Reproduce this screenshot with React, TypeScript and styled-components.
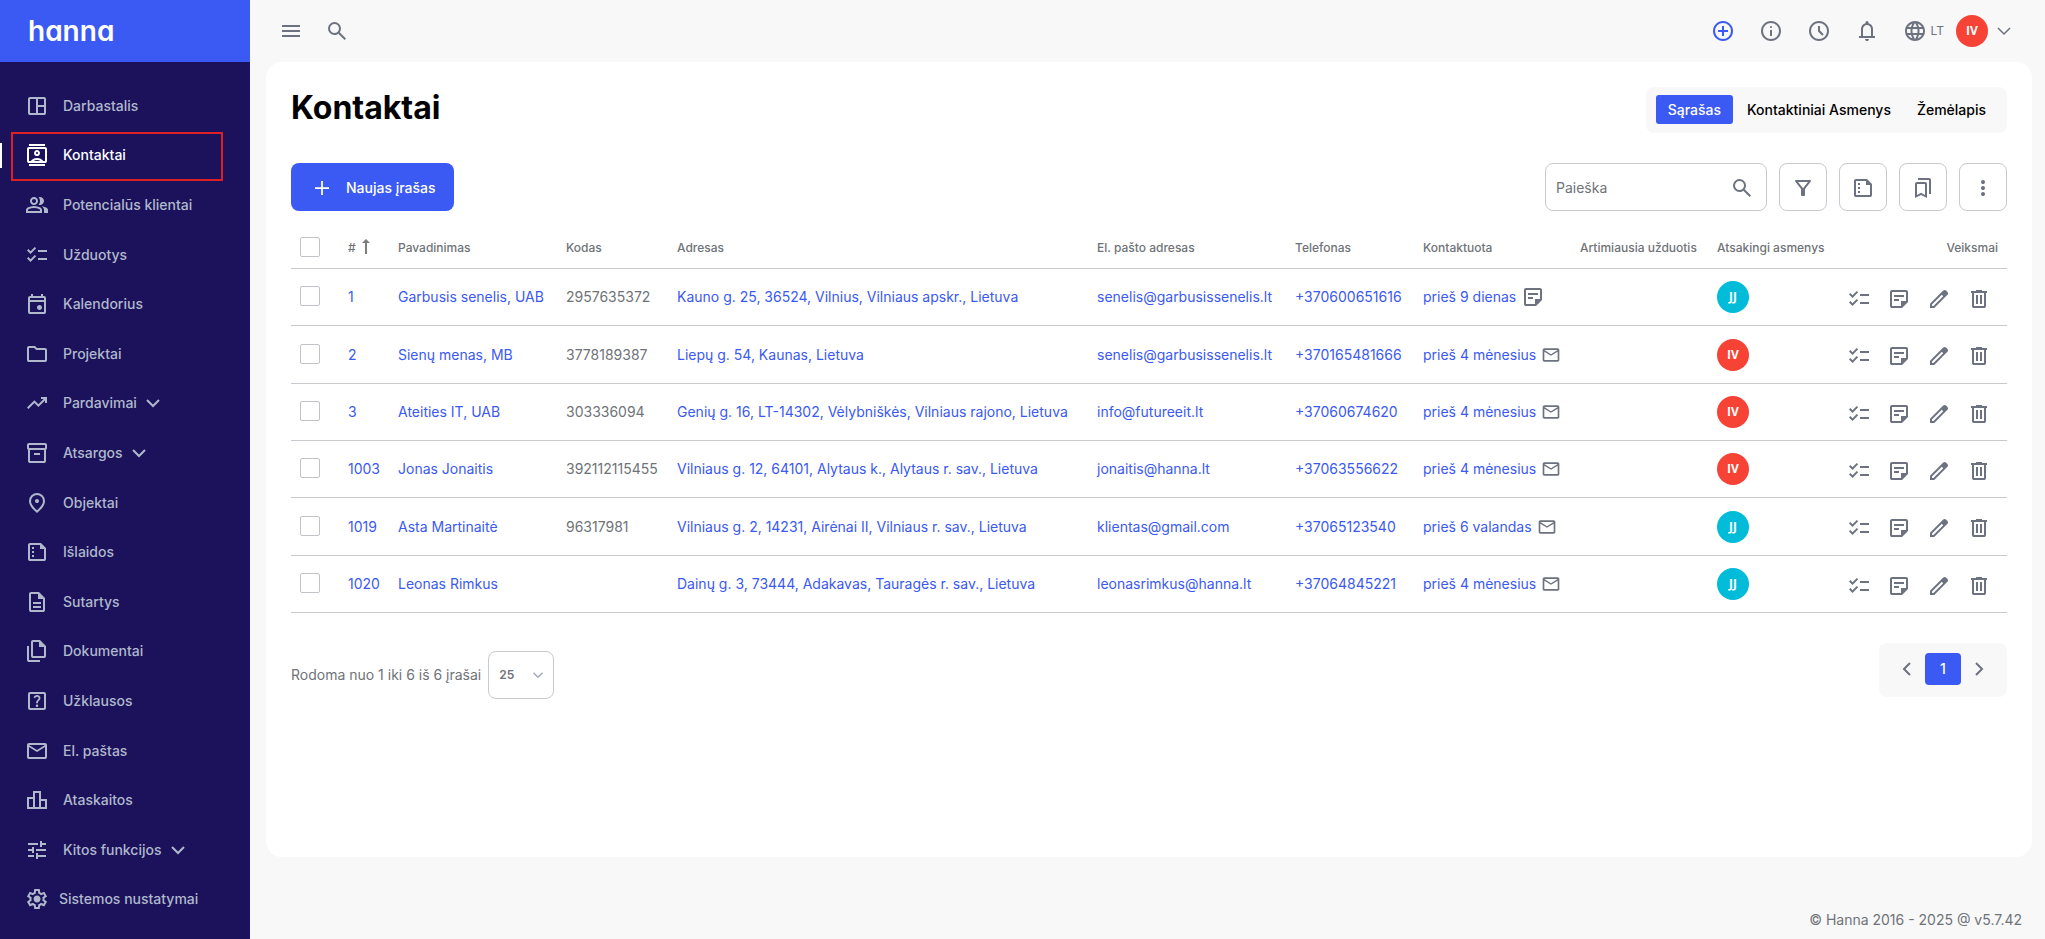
import React from "react";
import styled, { createGlobalStyle, css } from "styled-components";
import { MdLanguage, MdOutlineHelpCenter } from "react-icons/md";

const color = {
  brand: "#3b59f3",
  navy: "#1b125b",
  navText: "#b0b8cc",
  page: "#f8f8f8",
  line: "#c9cacf",
  text: "#6f7378",
  icon: "#6c727f",
  cyan: "#00bcd8",
  red: "#f64336",
};

const GlobalStyle = createGlobalStyle`
  *, *::before, *::after { box-sizing: border-box; }
  body {
    margin: 0;
    background: ${color.page};
    color: ${color.text};
    font: 400 14px/20px Inter, "Noto Sans", sans-serif;
  }
  button, input, select { font: inherit; color: inherit; }
  a { color: ${color.brand}; text-decoration: none; }
  svg { display: block; flex: none; }
`;

/* ---------- icons ---------- */

const RING =
  "M480-80q-83 0-156-31.5T197-197q-54-54-85.5-127T80-480q0-83 31.5-156T197-763q54-54 127-85.5T480-880q83 0 156 31.5T763-763q54 54 85.5 127T880-480q0 83-31.5 156T763-197q-54 54-127 85.5T480-80Zm0-80q134 0 227-93t93-227q0-134-93-227t-227-93q-134 0-227 93t-93 227q0 134 93 227t227 93Z";

const paths = {
  dashboard:
    "M200-120q-33 0-56.5-23.5T120-200v-560q0-33 23.5-56.5T200-840h560q33 0 56.5 23.5T840-760v560q0 33-23.5 56.5T760-120H200Zm240-80v-560H200v560h240Zm80 0h240v-240H520v240Zm0-320h240v-240H520v240Z",
  contacts:
    "M160-40v-80h640v80H160Zm0-800v-80h640v80H160Zm320 400q50 0 85-35t35-85q0-50-35-85t-85-35q-50 0-85 35t-35 85q0 50 35 85t85 35ZM160-160q-33 0-56.5-23.5T80-240v-480q0-33 23.5-56.5T160-800h640q33 0 56.5 23.5T880-720v480q0 33-23.5 56.5T800-160H160Zm70-80q45-56 109-88t141-32q77 0 141 32t109 88h70v-480H160v480h70Zm118 0h264q-29-20-62.5-30T480-280q-36 0-69.5 10T348-240Zm132-280q-17 0-28.5-11.5T440-560q0-17 11.5-28.5T480-600q17 0 28.5 11.5T520-560q0 17-11.5 28.5T480-520Z",
  group:
    "M40-160v-112q0-34 17.5-62.5T104-378q62-31 126-46.5T360-440q66 0 130 15.5T616-378q29 15 46.5 43.5T680-272v112H40Zm720 0v-120q0-44-24.5-84.5T666-434q51 6 96 20.5t84 35.5q36 20 55 44.5t19 53.5v120H760ZM360-480q-66 0-113-47t-47-113q0-66 47-113t113-47q66 0 113 47t47 113q0 66-47 113t-113 47Zm400-160q0 66-47 113t-113 47q-11 0-28-2.5t-28-5.5q27-32 41.5-71t14.5-81q0-42-14.5-81T544-792q14-5 28-6.5t28-1.5q66 0 113 47t47 113ZM120-240h480v-32q0-11-5.5-20T580-306q-54-27-109-40.5T360-360q-56 0-111 13.5T140-306q-9 5-14.5 14t-5.5 20v32Zm240-320q33 0 56.5-23.5T440-640q0-33-23.5-56.5T360-720q-33 0-56.5 23.5T280-640q0 33 23.5 56.5T360-560Z",
  checklist:
    "M222-200 80-342l56-56 85 85 170-170 56 57-225 226Zm0-320L80-662l56-56 85 85 170-170 56 57-225 226Zm298 240v-80h360v80H520Zm0-320v-80h360v80H520Z",
  event:
    "M580-240q-42 0-71-29t-29-71q0-42 29-71t71-29q42 0 71 29t29 71q0 42-29 71t-71 29ZM200-80q-33 0-56.5-23.5T120-160v-560q0-33 23.5-56.5T200-800h40v-80h80v80h320v-80h80v80h40q33 0 56.5 23.5T840-720v560q0 33-23.5 56.5T760-80H200Zm0-80h560v-400H200v400Zm0-480h560v-80H200v80Z",
  folder:
    "M160-160q-33 0-56.5-23.5T80-240v-480q0-33 23.5-56.5T160-800h240l80 80h320q33 0 56.5 23.5T880-640v400q0 33-23.5 56.5T800-160H160Zm0-80h640v-400H447l-80-80H160v480Z",
  trending: "m136-240-56-56 296-298 160 160 208-206H640v-80h240v240h-80v-104L536-320 376-480 136-240Z",
  inventory:
    "M200-80q-33 0-56.5-23.5T120-160v-451q-18-11-29-28.5T80-680v-120q0-33 23.5-56.5T160-880h640q33 0 56.5 23.5T880-800v120q0 23-11 40.5T840-611v451q0 33-23.5 56.5T760-80H200Zm0-520v440h560v-440H200Zm-40-80h640v-120H160v120Zm200 280h240v-80H360v80Z",
  place:
    "M480-480q33 0 56.5-23.5T560-560q0-33-23.5-56.5T480-640q-33 0-56.5 23.5T400-560q0 33 23.5 56.5T480-480Zm0 294q122-112 181-203.5T720-552q0-109-69.5-178.5T480-800q-101 0-170.5 69.5T240-552q0 71 59 162.5T480-186Zm0 106Q319-217 239.5-334.5T160-552q0-150 96.5-239T480-880q127 0 223.5 89T800-552q0 100-79.5 217.5T480-80Z",
  report:
    "M200-120q-33 0-56.5-23.5T120-200v-560q0-33 23.5-56.5T200-840h440l200 200v440q0 33-23.5 56.5T760-120H200Zm0-80h560v-400H600v-160H200v560Zm80-400v-80h80v80h-80Zm0 160v-80h80v80h-80Zm0 160v-80h80v80h-80Z",
  description:
    "M320-240h320v-80H320v80Zm0-160h320v-80H320v80ZM240-80q-33 0-56.5-23.5T160-160v-640q0-33 23.5-56.5T240-880h320l240 240v480q0 33-23.5 56.5T720-80H240Zm280-520v-200H240v640h480v-440H520Z",
  copy:
    "M760-200H320q-33 0-56.5-23.5T240-280v-560q0-33 23.5-56.5T320-920h280l240 240v400q0 33-23.5 56.5T760-200ZM560-640v-200H320v560h440v-360H560ZM160-40q-33 0-56.5-23.5T80-120v-560h80v560h440v80H160Z",
  mail:
    "M160-160q-33 0-56.5-23.5T80-240v-480q0-33 23.5-56.5T160-800h640q33 0 56.5 23.5T880-720v480q0 33-23.5 56.5T800-160H160Zm320-280L160-640v400h640v-400L480-440Zm0-80 320-200H160l320 200ZM160-640v-80 480-400Z",
  chart:
    "M160-200h160v-320H160v320Zm240 0h160v-560H400v560Zm240 0h160v-240H640v240ZM80-120v-480h240v-240h320v320h240v400H80Z",
  tune:
    "M440-120v-240h80v80h320v80H520v80h-80Zm-320-80v-80h240v80H120Zm160-160v-80H120v-80h160v-80h80v240h-80Zm160-80v-80h400v80H440Zm160-160v-240h80v80h160v80H680v80h-80Zm-480-80v-80h400v80H120Z",
  settings:
    "m370-80-16-128q-13-5-24.5-12T307-235l-119 50L78-375l103-78q-1-7-1-13.5v-27q0-6.5 1-13.5L78-585l110-190 119 50q11-8 23-15t24-12l16-128h220l16 128q13 5 24.5 12t22.5 15l119-50 110 190-103 78q1 7 1 13.5v27q0 6.5-2 13.5l103 78-110 190-118-50q-11 8-23 15t-24 12L590-80H370Zm70-80h79l14-106q31-8 57.5-23.5T639-327l99 41 39-68-86-65q5-14 7-29.5t2-31.5q0-16-2-31.5t-7-29.5l86-65-39-68-99 42q-22-23-48.5-38.5T533-694l-13-106h-79l-14 106q-31 8-57.5 23.5T321-633l-99-41-39 68 86 64q-5 15-7 30t-2 32q0 16 2 31t7 30l-86 65 39 68 99-42q22 23 48.5 38.5T427-266l13 106Zm42-180q58 0 99-41t41-99q0-58-41-99t-99-41q-59 0-99.5 41T342-480q0 58 40.5 99t99.5 41Z",
  menu: "M120-240v-80h720v80H120Zm0-200v-80h720v80H120Zm0-200v-80h720v80H120Z",
  search:
    "M784-120 532-372q-30 24-69 38t-83 14q-109 0-184.5-75.5T120-580q0-109 75.5-184.5T380-840q109 0 184.5 75.5T640-580q0 44-14 83t-38 69l252 252-56 56ZM380-400q75 0 127.5-52.5T560-580q0-75-52.5-127.5T380-760q-75 0-127.5 52.5T200-580q0 75 52.5 127.5T380-400Z",
  addCircle: "M440-280h80v-160h160v-80H520v-160h-80v160H280v80h160v160Z" + RING,
  info:
    "M440-280h80v-240h-80v240Zm40-320q17 0 28.5-11.5T520-640q0-17-11.5-28.5T480-680q-17 0-28.5 11.5T440-640q0 17 11.5 28.5T480-600Z" +
    RING,
  clock: "m612-292 56-56-148-148v-184h-80v216l172 172Z" + RING,
  bell:
    "M160-200v-80h80v-280q0-83 50-147.5T420-792v-28q0-25 17.5-42.5T480-880q25 0 42.5 17.5T540-820v28q80 20 130 84.5T720-560v280h80v80H160Zm320 120q-33 0-56.5-23.5T400-160h160q0 33-23.5 56.5T480-80ZM320-280h320v-280q0-66-47-113t-113-47q-66 0-113 47t-47 113v280Z",
  plus: "M445-200v-245H200v-70h245v-245h70v245h245v70H515v245h-70Z",
  filter:
    "M440-160q-17 0-28.5-11.5T400-200v-240L168-736q-15-20-4.5-42t36.5-22h560q26 0 36.5 22t-4.5 42L560-440v240q0 17-11.5 28.5T520-160h-80Zm40-308 198-252H282l198 252Z",
  bookmarks:
    "M160-80v-560q0-33 23.5-56.5T240-720h320q33 0 56.5 23.5T640-640v560L400-200 160-80Zm80-121 160-86 160 86v-439H240v439Zm560-39h-80v-560H280v-80h440q33 0 56.5 23.5T800-800v560Z",
  more:
    "M480-160q-33 0-56.5-23.5T400-240q0-33 23.5-56.5T480-320q33 0 56.5 23.5T560-240q0 33-23.5 56.5T480-160Zm0-240q-33 0-56.5-23.5T400-480q0-33 23.5-56.5T480-560q33 0 56.5 23.5T560-480q0 33-23.5 56.5T480-400Zm0-240q-33 0-56.5-23.5T400-720q0-33 23.5-56.5T480-800q33 0 56.5 23.5T560-720q0 33-23.5 56.5T480-640Z",
  note:
    "M200-200h360v-200h200v-360H200v560Zm0 80q-33 0-56.5-23.5T120-200v-560q0-33 23.5-56.5T200-840h560q33 0 56.5 23.5T840-760v400L600-120H200Zm80-280v-80h200v80H280Zm0-160v-80h400v80H280Z",
  edit:
    "M200-200h57l391-391-57-57-391 391v57Zm-80 80v-170l528-527q12-11 26.5-17t30.5-6q16 0 31 6t26 18l55 56q12 11 17.5 26t5.5 30q0 16-5.5 30.5T817-647L290-120H120Z",
  trash:
    "M280-120q-33 0-56.5-23.5T200-200v-520h-40v-80h200v-40h240v40h200v80h-40v520q0 33-23.5 56.5T680-120H280Zm400-600H280v520h400v-520ZM360-280h80v-360h-80v360Zm160 0h80v-360h-80v360Z",
};

type IconName = keyof typeof paths;

const Icon = ({ name, size = 24 }: { name: IconName; size?: number }) => (
  <svg width={size} height={size} viewBox="0 -960 960 960" fill="currentColor" aria-hidden="true">
    <path d={paths[name]} />
  </svg>
);

const chevrons = { down: "M2 5l6 6 6-6", left: "M11 2L5 8l6 6", right: "M5 2l6 6-6 6" };

const Chevron = ({ dir = "down", size = 16, weight = 2 }: { dir?: keyof typeof chevrons; size?: number; weight?: number }) => (
  <svg width={size} height={size} viewBox="0 0 16 16" fill="none" stroke="currentColor" strokeWidth={weight} aria-hidden="true">
    <path d={chevrons[dir]} />
  </svg>
);

const SortArrow = () => (
  <svg width="8" height="20" viewBox="0 0 8 20" fill="#7d7d7d" aria-hidden="true">
    <path d="M4 1L8 5H5v11H3V5H0z" />
  </svg>
);

/* ---------- shell ---------- */

const Shell = styled.div`
  display: grid;
  grid-template-columns: 250px minmax(0, 1fr);
  min-height: 100vh;
`;

const Sidebar = styled.aside`
  display: flex;
  flex-direction: column;
  background: ${color.navy};
`;

const Brand = styled.a`
  display: flex;
  align-items: center;
  height: 62px;
  padding-left: 28px;
  background: ${color.brand};
  color: #fff;
  font-size: 28px;
  font-weight: 600;
  line-height: 32px;
  font-feature-settings: "cv11";
`;

const Nav = styled.nav`
  display: flex;
  flex: 1;
  flex-direction: column;
  padding: 19px 0 15px;
`;

const NavLink = styled.a<{ $active?: boolean; $tight?: boolean }>`
  position: relative;
  display: flex;
  flex: 1;
  align-items: center;
  gap: ${(p) => (p.$tight ? 10 : 14)}px;
  min-height: 44px;
  padding-left: 25px;
  color: ${(p) => (p.$active ? "#fff" : color.navText)};
  font-weight: 500;

  ${(p) =>
    p.$active &&
    css`
      &::before {
        content: "";
        position: absolute;
        left: 0;
        width: 2px;
        height: 25px;
        background: #fff;
      }
      &::after {
        content: "";
        position: absolute;
        inset: 1px 27px -1px 11px;
        border: 2px solid #dd1f26;
      }
    `}
`;

const NavLabel = styled.span`
  display: flex;
  align-items: center;
  gap: 8px;
`;

const Main = styled.div`
  display: flex;
  flex-direction: column;
  min-width: 0;
`;

const Topbar = styled.header`
  display: flex;
  align-items: center;
  justify-content: space-between;
  height: 62px;
  padding: 0 33px 0 29px;
`;

const BarGroup = styled.div<{ $gap: number }>`
  display: flex;
  align-items: center;
  gap: ${(p) => p.$gap}px;
`;

const PlainButton = styled.button<{ $accent?: boolean }>`
  display: flex;
  align-items: center;
  gap: 4px;
  padding: 0;
  border: 0;
  background: none;
  color: ${(p) => (p.$accent ? color.brand : color.icon)};
  font-size: 12px;
  cursor: pointer;
`;

const Avatar = styled.span<{ $tone: string }>`
  display: flex;
  align-items: center;
  justify-content: center;
  width: 32px;
  height: 32px;
  border-radius: 50%;
  background: ${(p) => p.$tone};
  color: #fff;
  font-family: "Open Sans", sans-serif;
  font-size: 12px;
  font-weight: 700;
`;

const UserButton = styled(PlainButton)`
  gap: 8px;
`;

const Card = styled.main`
  flex: 1;
  margin: 0 13px 0 16px;
  padding: 25px;
  border-radius: 16px;
  background: #fff;
`;

const Footer = styled.footer`
  padding: 53px 23px 9px;
  text-align: right;
`;

/* ---------- card header ---------- */

const TitleRow = styled.div`
  display: flex;
  align-items: flex-start;
  justify-content: space-between;
`;

const Title = styled.h1`
  margin: 0;
  color: #000;
  font-size: 32px;
  font-weight: 700;
  line-height: 42px;
`;

const Tabs = styled.div`
  display: flex;
  gap: 2px;
  padding: 8px 9px 9px 10px;
  border-radius: 8px;
  background: ${color.page};
`;

const Tab = styled.button<{ $active?: boolean }>`
  height: 29px;
  padding: 0 12px;
  border: 0;
  border-radius: 3px;
  background: ${(p) => (p.$active ? color.brand : "transparent")};
  color: ${(p) => (p.$active ? "#fff" : "#000")};
  font-weight: 500;
  cursor: pointer;
`;

const Toolbar = styled.div`
  display: flex;
  justify-content: space-between;
  margin-top: 30px;
`;

const ToolGroup = styled.div`
  display: flex;
  gap: 12px;
`;

const PrimaryButton = styled.button`
  display: flex;
  align-items: center;
  gap: 12px;
  height: 48px;
  padding: 2px 18px 0 19px;
  border: 0;
  border-radius: 8px;
  background: ${color.brand};
  color: #fff;
  font-weight: 500;
  cursor: pointer;
`;

const outlined = css`
  height: 48px;
  border: 1px solid ${color.line};
  border-radius: 8px;
  background: #fff;
`;

const SearchBox = styled.label`
  ${outlined}
  display: flex;
  align-items: center;
  width: 222px;
  padding: 2px 12px 0 10px;
  color: ${color.icon};
`;

const SearchInput = styled.input`
  flex: 1;
  min-width: 0;
  padding: 0;
  border: 0;
  outline: 0;
  background: none;
  &::placeholder { color: ${color.text}; opacity: 1; }
`;

const SquareButton = styled.button`
  ${outlined}
  display: flex;
  align-items: center;
  justify-content: center;
  width: 48px;
  padding: 2px 0 0;
  color: ${color.icon};
  cursor: pointer;
`;

/* ---------- table ---------- */

const TableScroll = styled.div`
  margin-top: 16px;
  overflow-x: auto;
`;

const Table = styled.table`
  width: 100%;
  min-width: 1680px;
  border-collapse: separate;
  border-spacing: 0;
  table-layout: fixed;
  white-space: nowrap;
`;

const Col = styled.col<{ $w?: number }>`
  width: ${(p) => (p.$w ? `${p.$w}px` : "auto")};
`;

const Th = styled.th<{ $end?: boolean }>`
  height: 42px;
  padding: 0 9px;
  border-bottom: 1px solid ${color.line};
  font-size: 12px;
  font-weight: 500;
  text-align: ${(p) => (p.$end ? "right" : "left")};
`;

const Td = styled.td`
  height: 57px;
  padding: 0 9px;
  border-bottom: 1px solid ${color.line};
`;

const Row = styled.tr`
  &:nth-child(3n + 2) > td { height: 58px; }
`;

const SortButton = styled.button`
  display: flex;
  align-items: center;
  gap: 6px;
  padding: 0;
  border: 0;
  background: none;
  font-weight: 500;
  cursor: pointer;
`;

const Checkbox = styled.input`
  display: block;
  width: 20px;
  height: 20px;
  margin: 0 0 2px;
  appearance: none;
  border: 1px solid #c2c3c8;
  border-radius: 2px;
  background: #fff;
  &:checked { background: ${color.brand}; }
`;

const Contacted = styled.span`
  display: flex;
  align-items: center;
  gap: 5px;
  color: ${color.icon};
`;

const Actions = styled.div`
  display: flex;
  justify-content: flex-end;
  gap: 16px;
  padding: 3px 7px 0 0;
`;

/* ---------- table footer ---------- */

const TableFooter = styled.div`
  display: flex;
  align-items: flex-start;
  justify-content: space-between;
  margin-top: 30px;
`;

const Summary = styled.label`
  display: flex;
  align-items: center;
  gap: 7px;
  padding-top: 8px;
`;

const SelectWrap = styled.span`
  ${outlined}
  display: grid;
  align-items: center;
  width: 66px;
  > * { grid-area: 1 / 1; }
  > svg { justify-self: end; margin-right: 9px; color: #a3abb9; pointer-events: none; }
`;

const Select = styled.select`
  width: 100%;
  height: 100%;
  padding: 0 10px;
  border: 0;
  background: none;
  appearance: none;
  font-size: 12px;
  font-weight: 600;
`;

const Pagination = styled.nav`
  display: flex;
  padding: 10px 10px 12px;
  border-radius: 8px;
  background: ${color.page};
`;

const PageButton = styled.button<{ $active?: boolean }>`
  display: flex;
  align-items: center;
  justify-content: center;
  width: 36px;
  height: 32px;
  padding: 0;
  border: 0;
  border-radius: 4px;
  background: ${(p) => (p.$active ? color.brand : "transparent")};
  color: ${(p) => (p.$active ? "#fff" : color.icon)};
  font-weight: 500;
  cursor: pointer;
`;

/* ---------- data ---------- */

type NavItem = { label: string; icon: IconName | "help"; sub?: boolean; active?: boolean; tight?: boolean };

const navItems: NavItem[] = [
  { label: "Darbastalis", icon: "dashboard" },
  { label: "Kontaktai", icon: "contacts", active: true },
  { label: "Potencialūs klientai", icon: "group" },
  { label: "Užduotys", icon: "checklist" },
  { label: "Kalendorius", icon: "event" },
  { label: "Projektai", icon: "folder" },
  { label: "Pardavimai", icon: "trending", sub: true },
  { label: "Atsargos", icon: "inventory", sub: true },
  { label: "Objektai", icon: "place" },
  { label: "Išlaidos", icon: "report" },
  { label: "Sutartys", icon: "description" },
  { label: "Dokumentai", icon: "copy" },
  { label: "Užklausos", icon: "help" },
  { label: "El. paštas", icon: "mail" },
  { label: "Ataskaitos", icon: "chart" },
  { label: "Kitos funkcijos", icon: "tune", sub: true },
  { label: "Sistemos nustatymai", icon: "settings", tight: true },
];

type Contact = {
  id: number;
  name: string;
  code: string;
  address: string;
  email: string;
  phone: string;
  contacted: string;
  via: "mail" | "note";
  owner: "JJ" | "IV";
};

const contacts: Contact[] = [
  { id: 1, name: "Garbusis senelis, UAB", code: "2957635372", address: "Kauno g. 25, 36524, Vilnius, Vilniaus apskr., Lietuva", email: "senelis@garbusissenelis.lt", phone: "+370600651616", contacted: "prieš 9 dienas", via: "note", owner: "JJ" },
  { id: 2, name: "Sienų menas, MB", code: "3778189387", address: "Liepų g. 54, Kaunas, Lietuva", email: "senelis@garbusissenelis.lt", phone: "+370165481666", contacted: "prieš 4 mėnesius", via: "mail", owner: "IV" },
  { id: 3, name: "Ateities IT, UAB", code: "303336094", address: "Genių g. 16, LT-14302, Vėlybniškės, Vilniaus rajono, Lietuva", email: "info@futureeit.lt", phone: "+37060674620", contacted: "prieš 4 mėnesius", via: "mail", owner: "IV" },
  { id: 1003, name: "Jonas Jonaitis", code: "392112115455", address: "Vilniaus g. 12, 64101, Alytaus k., Alytaus r. sav., Lietuva", email: "jonaitis@hanna.lt", phone: "+37063556622", contacted: "prieš 4 mėnesius", via: "mail", owner: "IV" },
  { id: 1019, name: "Asta Martinaitė", code: "96317981", address: "Vilniaus g. 2, 14231, Airėnai II, Vilniaus r. sav., Lietuva", email: "klientas@gmail.com", phone: "+37065123540", contacted: "prieš 6 valandas", via: "mail", owner: "JJ" },
  { id: 1020, name: "Leonas Rimkus", code: "", address: "Dainų g. 3, 73444, Adakavas, Tauragės r. sav., Lietuva", email: "leonasrimkus@hanna.lt", phone: "+37064845221", contacted: "prieš 4 mėnesius", via: "mail", owner: "JJ" },
];

const columnWidths = [48, 50, 168, 111, undefined, 198, 128, 157, 137, 120, 179];

const headings = ["Pavadinimas", "Kodas", "Adresas", "El. pašto adresas", "Telefonas", "Kontaktuota", "Artimiausia užduotis", "Atsakingi asmenys"];

const rowActions: { icon: IconName; label: string }[] = [
  { icon: "checklist", label: "Užduotis" },
  { icon: "note", label: "Pastaba" },
  { icon: "edit", label: "Redaguoti" },
  { icon: "trash", label: "Ištrinti" },
];

const tools: { icon: IconName; label: string }[] = [
  { icon: "filter", label: "Filtras" },
  { icon: "report", label: "Stulpeliai" },
  { icon: "bookmarks", label: "Žymos" },
  { icon: "more", label: "Daugiau" },
];

/* ---------- page ---------- */

const ContactRow = ({ c }: { c: Contact }) => (
  <Row>
    <Td><Checkbox type="checkbox" aria-label={c.name} /></Td>
    <Td><a href="#">{c.id}</a></Td>
    <Td><a href="#">{c.name}</a></Td>
    <Td>{c.code}</Td>
    <Td><a href="#">{c.address}</a></Td>
    <Td><a href="#">{c.email}</a></Td>
    <Td><a href="#">{c.phone}</a></Td>
    <Td>
      <Contacted>
        <a href="#">{c.contacted}</a>
        <Icon name={c.via} size={c.via === "mail" ? 20 : 24} />
      </Contacted>
    </Td>
    <Td />
    <Td><Avatar $tone={c.owner === "JJ" ? color.cyan : color.red}>{c.owner}</Avatar></Td>
    <Td>
      <Actions>
        {rowActions.map((a) => (
          <PlainButton key={a.icon} aria-label={a.label}><Icon name={a.icon} /></PlainButton>
        ))}
      </Actions>
    </Td>
  </Row>
);

export default function App() {
  return (
    <>
      <GlobalStyle />
      <Shell>
        <Sidebar>
          <Brand href="#">hanna</Brand>
          <Nav>
            {navItems.map((n) => (
              <NavLink key={n.label} href="#" $active={n.active} $tight={n.tight}>
                {n.icon === "help" ? <MdOutlineHelpCenter size={24} /> : <Icon name={n.icon} />}
                <NavLabel>
                  {n.label}
                  {n.sub && <Chevron />}
                </NavLabel>
              </NavLink>
            ))}
          </Nav>
        </Sidebar>

        <Main>
          <Topbar>
            <BarGroup $gap={22}>
              <PlainButton aria-label="Meniu"><Icon name="menu" /></PlainButton>
              <PlainButton aria-label="Paieška"><Icon name="search" /></PlainButton>
            </BarGroup>
            <BarGroup $gap={12}>
              <BarGroup $gap={24}>
                <PlainButton $accent aria-label="Pridėti"><Icon name="addCircle" /></PlainButton>
                <PlainButton aria-label="Informacija"><Icon name="info" /></PlainButton>
                <PlainButton aria-label="Istorija"><Icon name="clock" /></PlainButton>
                <PlainButton aria-label="Pranešimai"><Icon name="bell" /></PlainButton>
                <PlainButton><MdLanguage size={24} />LT</PlainButton>
              </BarGroup>
              <UserButton aria-label="Paskyra">
                <Avatar $tone={color.red}>IV</Avatar>
                <Chevron weight={1.5} />
              </UserButton>
            </BarGroup>
          </Topbar>

          <Card>
            <TitleRow>
              <Title>Kontaktai</Title>
              <Tabs>
                <Tab $active>Sąrašas</Tab>
                <Tab>Kontaktiniai Asmenys</Tab>
                <Tab>Žemėlapis</Tab>
              </Tabs>
            </TitleRow>

            <Toolbar>
              <PrimaryButton><Icon name="plus" />Naujas įrašas</PrimaryButton>
              <ToolGroup>
                <SearchBox>
                  <SearchInput type="text" placeholder="Paieška" aria-label="Paieška" />
                  <Icon name="search" />
                </SearchBox>
                {tools.map((t) => (
                  <SquareButton key={t.icon} aria-label={t.label}><Icon name={t.icon} /></SquareButton>
                ))}
              </ToolGroup>
            </Toolbar>

            <TableScroll>
              <Table>
                <colgroup>
                  {columnWidths.map((w, i) => <Col key={i} $w={w} />)}
                </colgroup>
                <thead>
                  <tr>
                    <Th><Checkbox type="checkbox" aria-label="Pažymėti visus" /></Th>
                    <Th><SortButton># <SortArrow /></SortButton></Th>
                    {headings.map((h) => <Th key={h}>{h}</Th>)}
                    <Th $end>Veiksmai</Th>
                  </tr>
                </thead>
                <tbody>
                  {contacts.map((c) => <ContactRow key={c.id} c={c} />)}
                </tbody>
              </Table>
            </TableScroll>

            <TableFooter>
              <Summary>
                Rodoma nuo 1 iki 6 iš 6 įrašai
                <SelectWrap>
                  <Select defaultValue="25" aria-label="Įrašų skaičius">
                    <option>25</option>
                    <option>50</option>
                    <option>100</option>
                  </Select>
                  <Chevron size={12} />
                </SelectWrap>
              </Summary>
              <Pagination aria-label="Puslapiai">
                <PageButton aria-label="Ankstesnis"><Chevron dir="left" /></PageButton>
                <PageButton $active>1</PageButton>
                <PageButton aria-label="Kitas"><Chevron dir="right" /></PageButton>
              </Pagination>
            </TableFooter>
          </Card>

          <Footer>© Hanna 2016 - 2025 @ v5.7.42</Footer>
        </Main>
      </Shell>
    </>
  );
}
